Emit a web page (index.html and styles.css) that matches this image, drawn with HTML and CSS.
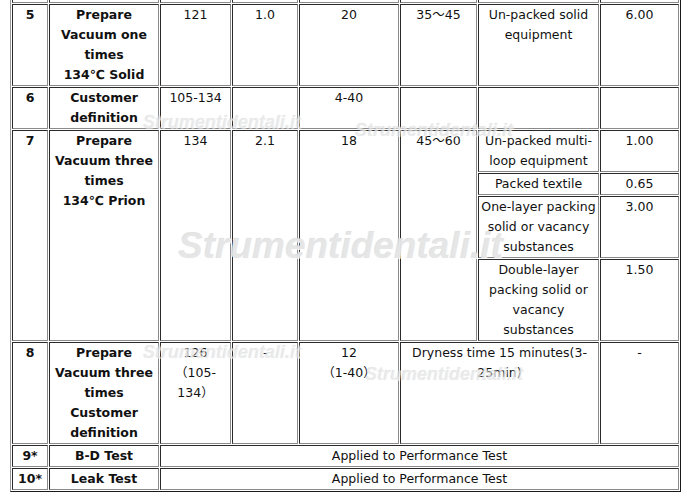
FILE: index.html
```html
<!DOCTYPE html>
<html>
<head>
<meta charset="utf-8">
<link rel="stylesheet" href="styles.css">
</head>
<body>
<div class="page">
<table class="spec">
  <colgroup>
    <col class="c1"><col class="c2"><col class="c3"><col class="c4"><col class="c5"><col class="c6"><col class="c7"><col class="c8">
  </colgroup>
  <tr class="prev"><td></td><td></td><td></td><td></td><td></td><td></td><td></td><td></td></tr>
  <tr>
    <td class="num">5</td>
    <td class="name">Prepare Vacuum one times<br>134℃ Solid</td>
    <td>121</td><td>1.0</td><td>20</td><td>35～45</td>
    <td>Un-packed solid equipment</td><td>6.00</td>
  </tr>
  <tr>
    <td class="num">6</td>
    <td class="name">Customer definition</td>
    <td>105-134</td><td></td><td>4-40</td><td></td><td></td><td></td>
  </tr>
  <tr>
    <td class="num" rowspan="4">7</td>
    <td class="name" rowspan="4">Prepare Vacuum three times<br>134℃ Prion</td>
    <td rowspan="4">134</td><td rowspan="4">2.1</td><td rowspan="4">18</td><td rowspan="4">45～60</td>
    <td>Un-packed multi-loop equipment</td><td>1.00</td>
  </tr>
  <tr><td>Packed textile</td><td>0.65</td></tr>
  <tr><td>One-layer packing solid or vacancy substances</td><td>3.00</td></tr>
  <tr><td>Double-layer packing solid or vacancy substances</td><td>1.50</td></tr>
  <tr>
    <td class="num">8</td>
    <td class="name">Prepare Vacuum three times Customer definition</td>
    <td>126<br>（105-134）</td><td>-</td><td>12<br>（1-40）</td>
    <td colspan="2">Dryness time 15 minutes(3-25min)</td><td>-</td>
  </tr>
  <tr>
    <td class="num">9*</td>
    <td class="name">B-D Test</td>
    <td colspan="6">Applied to Performance Test</td>
  </tr>
  <tr>
    <td class="num">10*</td>
    <td class="name">Leak Test</td>
    <td colspan="6">Applied to Performance Test</td>
  </tr>
</table>
<div class="wm wm-big">Strumentidentali.it</div>
<div class="wm wm-s1">Strumentidentali.it</div>
<div class="wm wm-s2">Strumentidentali.it</div>
<div class="wm wm-s3">Strumentidentali.it</div>
<div class="wm wm-s4">Strumentidentali.it</div>
</div>
</body>
</html>
```
FILE: styles.css
```css
html, body {
  margin: 0;
  padding: 0;
  background: #fff;
  overflow: hidden;
}
.page {
  position: relative;
  width: 691px;
  height: 497px;
  overflow: hidden;
}
.spec {
  margin: -21px 0 0 10px;
  width: 671px;
  table-layout: fixed;
  border-collapse: separate;
  border-spacing: 1px;
  border: 1px solid;
  border-color: #9a9a9a #1a1a1a #1a1a1a #9a9a9a;
  font-family: "DejaVu Sans", Verdana, "Noto Sans CJK SC", sans-serif;
  font-size: 12.5px;
  line-height: 20px;
  color: #111;
}
.c1 { width: 36px; }
.c2 { width: 110px; }
.c3 { width: 71px; }
.c4 { width: 66px; }
.c5 { width: 100px; }
.c6 { width: 77px; }
.c7 { width: 121px; }
.c8 { width: 79px; }
.spec td {
  box-sizing: border-box;
  border: 1px solid;
  border-color: #2a2a2a #8a8a8a #8a8a8a #2a2a2a;
  padding: 0 1px;
  text-align: center;
  vertical-align: top;
}
.spec tr.prev td {
  height: 22px;
}
.spec td.num,
.spec td.name {
  font-weight: bold;
}
.wm {
  position: absolute;
  font-family: "Liberation Sans", Arial, sans-serif;
  font-weight: bold;
  font-style: italic;
  line-height: 1;
  white-space: nowrap;
  color: rgba(228, 228, 228, 0.5);
  text-shadow: 1px 1px 0 rgba(255, 255, 255, 0.5), 0 0 1px rgba(175, 175, 175, 0.3);
  pointer-events: none;
}
.wm-big {
  left: 178px;
  top: 227px;
  font-size: 37px;
  color: rgba(225, 225, 225, 0.8);
  text-shadow: 1px 1px 0 rgba(255, 255, 255, 0.8), 0 0 1px rgba(175, 175, 175, 0.35);
}
.wm-s1 {
  left: 143px;
  top: 113px;
  font-size: 18px;
}
.wm-s2 {
  left: 355px;
  top: 121px;
  font-size: 18px;
}
.wm-s3 {
  left: 143px;
  top: 343px;
  font-size: 18px;
}
.wm-s4 {
  left: 365px;
  top: 365px;
  font-size: 18px;
}
```
